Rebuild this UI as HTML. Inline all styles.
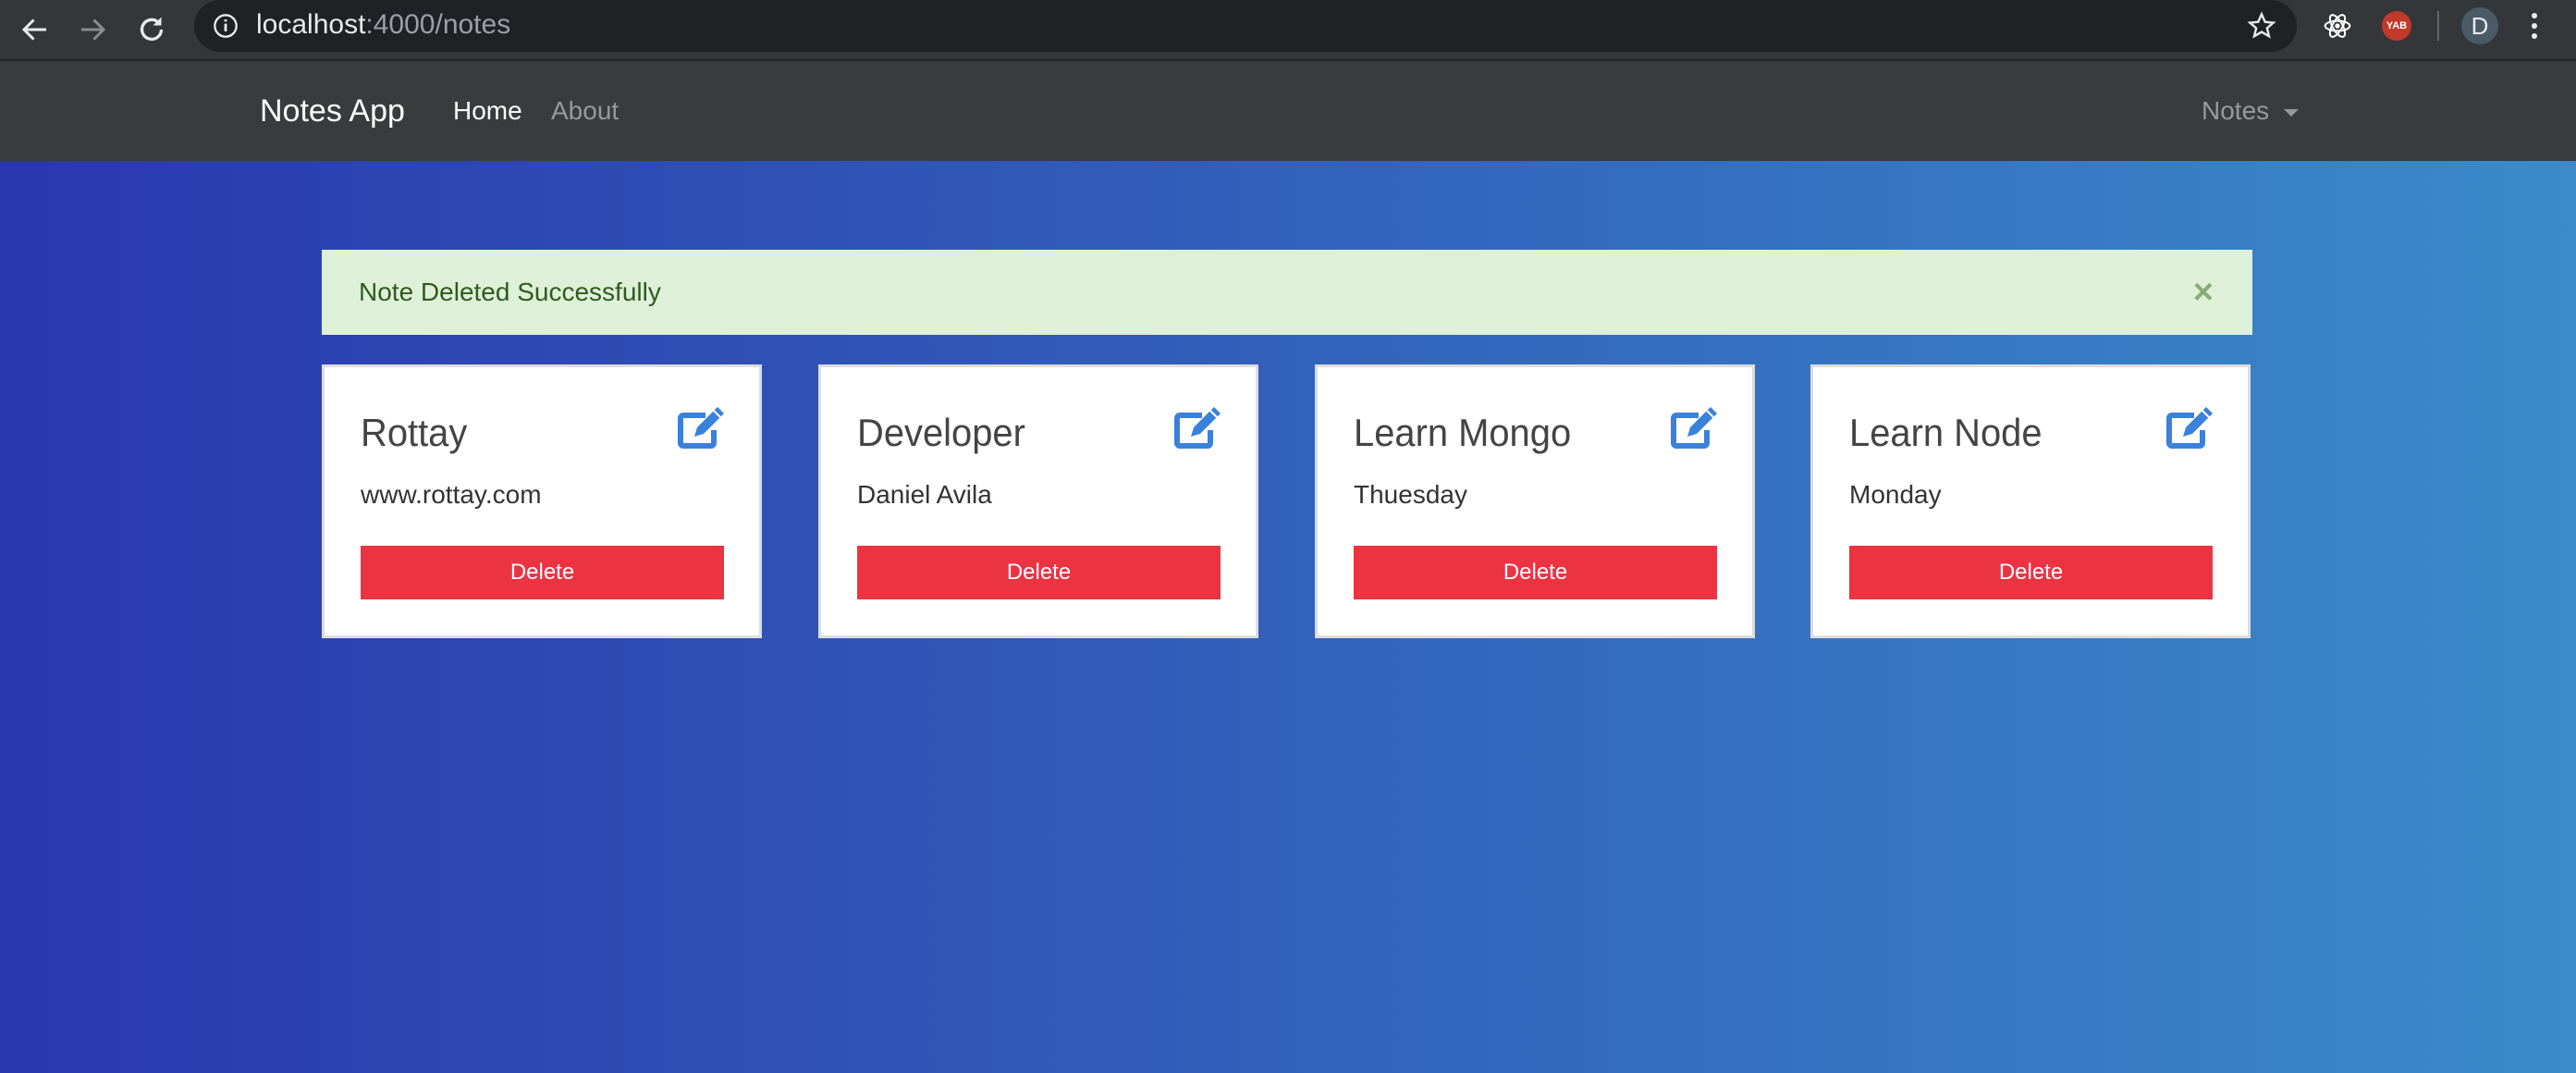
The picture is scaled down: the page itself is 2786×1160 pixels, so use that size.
<!DOCTYPE html>
<html><head><meta charset="utf-8"><style>
*{margin:0;padding:0;box-sizing:border-box}
body{width:2786px;height:1160px;overflow:hidden;font-family:"Liberation Sans",sans-serif;background:linear-gradient(to right,#2a37ae,#3a8bc9);position:relative}
.chrome{position:absolute;left:0;top:0;width:2786px;height:66px;background:#35363a;border-bottom:2px solid #242528}
.url{position:absolute;left:210px;top:0;width:2274px;height:56px;background:#202124;border-radius:28px}
.url span{position:absolute;left:67px;top:10px;font-size:30px;color:#e8eaed}
.nav{position:absolute;left:0;top:66px;width:2786px;height:108px;background:#3a3b3d}
.nav .t{position:absolute;top:0;line-height:108px;color:#fff}
.alert{position:absolute;left:348px;top:270px;width:2088px;height:92px;background:#dff0d8;color:#2f5b1f;font-size:28px;line-height:92px;padding-left:40px}
.alert .x{position:absolute;right:42px;top:0;color:#8aab78;font-size:38px;font-weight:bold}
.card{position:absolute;top:394px;width:476px;height:296px;background:#fff;border:3px solid #ddd}
.card h2{position:absolute;left:39px;top:44px;font-size:42px;font-weight:normal;color:#444;line-height:54px;transform:scaleX(0.95);transform-origin:left}
.card p{position:absolute;left:39px;top:121px;font-size:28px;color:#333;line-height:34px}
.card .b{position:absolute;left:39px;top:193px;width:393px;height:58px;background:#ec3342;color:#fff;font-size:24px;line-height:58px;text-align:center}
.card svg{position:absolute;left:382px;top:40px}
</style></head><body>
<div class="chrome">
<svg style="position:absolute;left:20px;top:14px" width="36" height="36" viewBox="0 0 24 24"><path d="M20 12H5M11 5l-7 7 7 7" stroke="#e8eaed" stroke-width="2" fill="none"/></svg>
<svg style="position:absolute;left:82px;top:14px" width="36" height="36" viewBox="0 0 24 24"><path d="M4 12h15M13 5l7 7-7 7" stroke="#8a8b8d" stroke-width="2" fill="none"/></svg>
<svg style="position:absolute;left:146px;top:14px" width="36" height="36" viewBox="0 0 24 24"><path d="M19 12a7 7 0 1 1-2-5" stroke="#e8eaed" stroke-width="2.2" fill="none"/><path d="M19 3v6h-6z" fill="#e8eaed"/></svg>
<div class="url"><svg style="position:absolute;left:20px;top:14px" width="28" height="28" viewBox="0 0 24 24"><circle cx="12" cy="12" r="10" stroke="#e8eaed" stroke-width="2" fill="none"/><path d="M12 10v7M12 6v2" stroke="#e8eaed" stroke-width="2.4"/></svg><span>localhost<span style="position:static;color:#9aa0a6">:4000/notes</span></span>
<svg style="position:absolute;left:2220px;top:12px" width="32" height="32" viewBox="0 0 24 24"><path d="M12 2.5l2.8 6.3 6.7.6-5.1 4.4 1.6 6.6L12 16.9l-6 3.5 1.6-6.6-5.1-4.4 6.7-.6z" stroke="#e8eaed" stroke-width="1.8" fill="none"/></svg></div>
<svg style="position:absolute;left:2512px;top:12px" width="32" height="32" viewBox="0 0 24 24"><g stroke="#fff" stroke-width="1.5" fill="none"><ellipse cx="12" cy="12" rx="10" ry="4"/><ellipse cx="12" cy="12" rx="10" ry="4" transform="rotate(60 12 12)"/><ellipse cx="12" cy="12" rx="10" ry="4" transform="rotate(120 12 12)"/></g><circle cx="12" cy="12" r="2" fill="#fff"/></svg>
<div style="position:absolute;left:2576px;top:12px;width:32px;height:32px;border-radius:50%;background:#c0392b;color:#fff;font-size:11px;font-weight:bold;text-align:center;line-height:32px">YAB</div>
<div style="position:absolute;left:2636px;top:12px;width:2px;height:32px;background:#666"></div>
<div style="position:absolute;left:2662px;top:8px;width:40px;height:40px;border-radius:50%;background:#4a5b66;color:#e8eaed;font-size:26px;text-align:center;line-height:40px">D</div>
<svg style="position:absolute;left:2736px;top:12px" width="10" height="32" viewBox="0 0 10 32"><circle cx="5" cy="5" r="3" fill="#e8eaed"/><circle cx="5" cy="16" r="3" fill="#e8eaed"/><circle cx="5" cy="27" r="3" fill="#e8eaed"/></svg>
</div>
<div class="nav">
<span class="t" style="left:281px;font-size:34px">Notes App</span>
<span class="t" style="left:490px;font-size:28px">Home</span>
<span class="t" style="left:596px;font-size:28px;color:#999">About</span>
<span class="t" style="left:2381px;font-size:28px;color:#999">Notes <span style="display:inline-block;width:0;height:0;border-left:8px solid transparent;border-right:8px solid transparent;border-top:8px solid #999;vertical-align:middle;margin-left:8px"></span></span>
</div>
<div class="alert">Note Deleted Successfully<span class="x">×</span></div>
<div class="card" style="left:348px"><h2>Rottay</h2><svg width="52" height="48" viewBox="0 0 52 48"><path d="M30 12H6a3 3 0 0 0-3 3v27a3 3 0 0 0 3 3h30a3 3 0 0 0 3-3V28" stroke="#3a81dc" stroke-width="6" fill="none"/><path d="M43 3l7 7-22 22-10 3 3-10z" fill="#3a81dc"/><path d="M39 7l7 7" stroke="#fff" stroke-width="2"/></svg><p>www.rottay.com</p><div class="b">Delete</div></div>
<div class="card" style="left:885px"><h2>Developer</h2><svg width="52" height="48" viewBox="0 0 52 48"><path d="M30 12H6a3 3 0 0 0-3 3v27a3 3 0 0 0 3 3h30a3 3 0 0 0 3-3V28" stroke="#3a81dc" stroke-width="6" fill="none"/><path d="M43 3l7 7-22 22-10 3 3-10z" fill="#3a81dc"/><path d="M39 7l7 7" stroke="#fff" stroke-width="2"/></svg><p>Daniel Avila</p><div class="b">Delete</div></div>
<div class="card" style="left:1422px"><h2>Learn Mongo</h2><svg width="52" height="48" viewBox="0 0 52 48"><path d="M30 12H6a3 3 0 0 0-3 3v27a3 3 0 0 0 3 3h30a3 3 0 0 0 3-3V28" stroke="#3a81dc" stroke-width="6" fill="none"/><path d="M43 3l7 7-22 22-10 3 3-10z" fill="#3a81dc"/><path d="M39 7l7 7" stroke="#fff" stroke-width="2"/></svg><p>Thuesday</p><div class="b">Delete</div></div>
<div class="card" style="left:1958px"><h2>Learn Node</h2><svg width="52" height="48" viewBox="0 0 52 48"><path d="M30 12H6a3 3 0 0 0-3 3v27a3 3 0 0 0 3 3h30a3 3 0 0 0 3-3V28" stroke="#3a81dc" stroke-width="6" fill="none"/><path d="M43 3l7 7-22 22-10 3 3-10z" fill="#3a81dc"/><path d="M39 7l7 7" stroke="#fff" stroke-width="2"/></svg><p>Monday</p><div class="b">Delete</div></div>
</body></html>
